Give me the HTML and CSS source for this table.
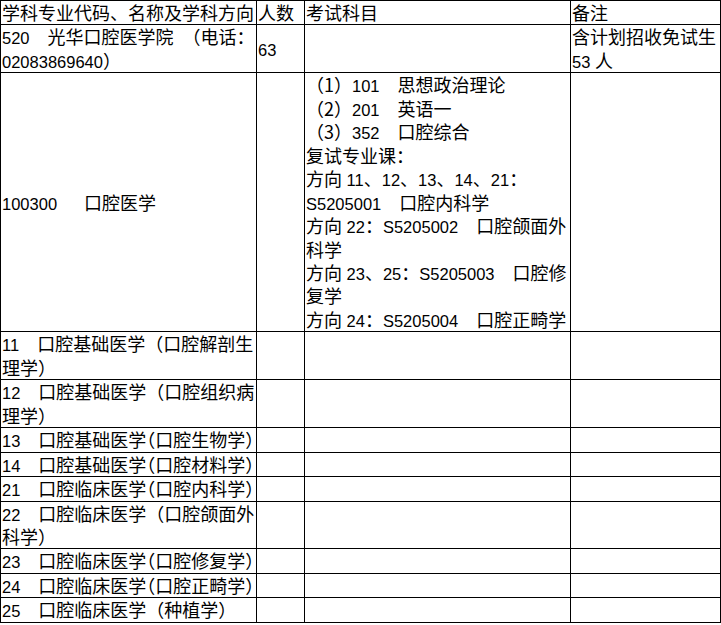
FILE: index.html
```html
<!DOCTYPE html>
<html lang="zh-CN">
<head>
<meta charset="utf-8">
<title>学科专业目录</title>
<link rel="stylesheet" href="styles.css">
</head>
<body>
<table class="grid">
  <colgroup>
    <col class="c1">
    <col class="c2">
    <col class="c3">
    <col class="c4">
  </colgroup>
  <tr>
    <td>学科专业代码、名称及学科方向</td>
    <td>人数</td>
    <td>考试科目</td>
    <td>备注</td>
  </tr>
  <tr>
    <td><span class="n">520</span>　光华口腔医学院&ensp;（电话：<br><span class="n">02083869640</span>）</td>
    <td><span class="n">63</span></td>
    <td></td>
    <td>含计划招收免试生<br><span class="n">53 </span>人</td>
  </tr>
  <tr>
    <td><span class="n">100300</span>　&ensp;口腔医学</td>
    <td></td>
    <td class="exam">（1）<span class="n">101</span>　思想政治理论<br>（2）<span class="n">201</span>　英语一<br>（3）<span class="n">352</span>　口腔综合<br>复试专业课：<br>方向<span class="n"> 11</span>、<span class="n">12</span>、<span class="n">13</span>、<span class="n">14</span>、<span class="n">21</span>：<br><span class="n">S5205001</span>　口腔内科学<br>方向<span class="n"> 22</span>：<span class="n">S5205002</span>　口腔颌面外<br>科学<br>方向<span class="n"> 23</span>、<span class="n">25</span>：<span class="n">S5205003</span>　口腔修<br>复学<br>方向<span class="n"> 24</span>：<span class="n">S5205004</span>　口腔正畸学</td>
    <td></td>
  </tr>
  <tr><td><span class="n">11</span>　口腔基础医学（口腔解剖生<br>理学）</td><td></td><td></td><td></td></tr>
  <tr><td><span class="n">12</span>　口腔基础医学（口腔组织病<br>理学）</td><td></td><td></td><td></td></tr>
  <tr><td><span class="n">13</span>　口腔基础医学<span class="p">（</span>口腔生物学<span class="p">）</span></td><td></td><td></td><td></td></tr>
  <tr><td><span class="n">14</span>　口腔基础医学<span class="p">（</span>口腔材料学<span class="p">）</span></td><td></td><td></td><td></td></tr>
  <tr><td><span class="n">21</span>　口腔临床医学<span class="p">（</span>口腔内科学<span class="p">）</span></td><td></td><td></td><td></td></tr>
  <tr><td><span class="n">22</span>　口腔临床医学（口腔颌面外<br>科学）</td><td></td><td></td><td></td></tr>
  <tr><td><span class="n">23</span>　口腔临床医学<span class="p">（</span>口腔修复学<span class="p">）</span></td><td></td><td></td><td></td></tr>
  <tr><td><span class="n">24</span>　口腔临床医学<span class="p">（</span>口腔正畸学<span class="p">）</span></td><td></td><td></td><td></td></tr>
  <tr><td><span class="n">25</span>　口腔临床医学（种植学）</td><td></td><td></td><td></td></tr>
</table>
</body>
</html>
```

FILE: styles.css
```css
html, body {
  margin: 0;
  padding: 0;
  background: #fff;
}
body {
  font-family: "Noto Sans CJK SC", "Liberation Sans", sans-serif;
  font-size: 18px;
  color: #000;
}
.grid {
  border-collapse: collapse;
  table-layout: fixed;
  width: 720px;
}
.c1 { width: 256px; }
.c2 { width: 48px; }
.c3 { width: 266px; }
.c4 { width: 150px; }
.grid td {
  border: 1px solid #000;
  padding: 0 1px;
  line-height: 23.45px;
  vertical-align: middle;
  white-space: nowrap;
  overflow: hidden;
}
.grid td.exam {
  vertical-align: top;
}
.n {
  font-family: "Liberation Sans", sans-serif;
  font-size: 16.5px;
  line-height: 1;
}
.p {
  font-feature-settings: "halt" 1;
}
```
